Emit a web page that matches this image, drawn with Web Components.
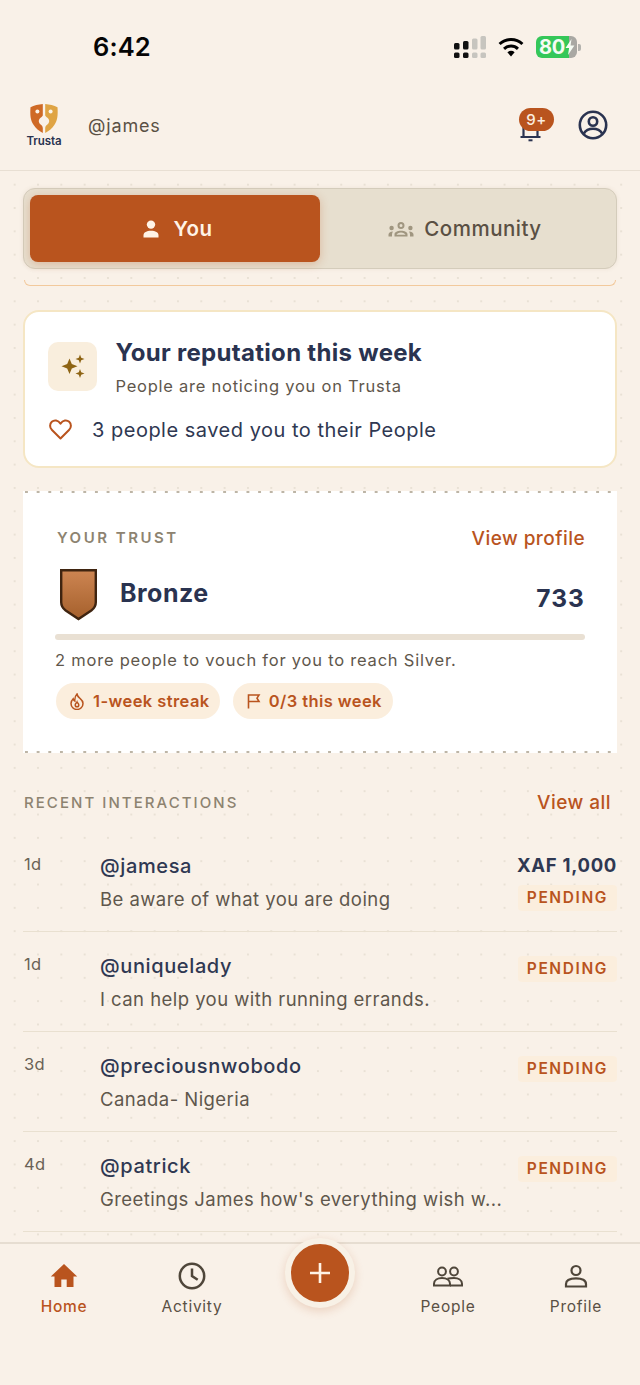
<!doctype html>
<html>
<head>
<meta charset="utf-8">
<title>Trusta</title>
<style>
  html, body { margin: 0; padding: 0; background: #f9f1e8; }
  body { width: 640px; height: 1385px; overflow: hidden; font-family: Inter, "Liberation Sans", sans-serif; display: flex; flex-direction: column; }
</style>
</head>
<body>
<status-bar></status-bar>
<top-header></top-header>
<home-feed>
  <tab-switch></tab-switch>
  <reputation-card></reputation-card>
  <trust-card></trust-card>
  <section-head></section-head>
  <interaction-row when="1d" handle="@jamesa" text="Be aware of what you are doing" amount="XAF 1,000"></interaction-row>
  <interaction-row when="1d" handle="@uniquelady" text="I can help you with running errands."></interaction-row>
  <interaction-row when="3d" handle="@preciousnwobodo" text="Canada- Nigeria"></interaction-row>
  <interaction-row when="4d" handle="@patrick" text="Greetings James how's everything wish w..."></interaction-row>
</home-feed>
<bottom-nav></bottom-nav>

<script>
class StatusBar extends HTMLElement {
  constructor () {
    super()
    this.shadow = this.attachShadow({ mode: 'open' })
  }

  connectedCallback () {
    this.shadow.innerHTML = `
    <style>
      :host{ display: flex; height: 90px; flex: none; box-sizing: border-box; padding: 30px 59px 0 93px; justify-content: space-between; align-items: flex-start; }
      .time{ font: 600 25.5px/34px Inter, sans-serif; color: #050505; letter-spacing: 0.1px; }
      .icons{ display: flex; align-items: center; gap: 11px; height: 34px; }
      svg{ display: block; }
      .battery{ position: relative; width: 41px; height: 22px; border-radius: 6px; overflow: hidden; background: linear-gradient(90deg, #35c759 0 80%, #a9a8a3 80%); }
      .battery span{ position: absolute; left: 3px; top: 0; font: 700 20px/22px Inter, sans-serif; color: #f5fbf3; letter-spacing: -0.3px; }
      .battery svg{ position: absolute; left: 29px; top: 3px; }
      .cap{ width: 3px; height: 7px; background: #b4b3ae; border-radius: 0 2px 2px 0; margin-left: -10px; }
    </style>
    <div class="time">6:42</div>
    <div class="icons">
      <svg width="32" height="22" viewBox="0 0 32 22">
        <rect x="0" y="7" width="5.500" height="6.500" rx="1.500" fill="#111"/>
        <rect x="9" y="5" width="5.500" height="8.500" rx="1.500" fill="#111"/>
        <rect x="18" y="2.500" width="5.500" height="11" rx="1.500" fill="#c7c5bf"/>
        <rect x="26.500" y="0" width="5.500" height="13.500" rx="1.500" fill="#c7c5bf"/>
        <rect x="0" y="16.500" width="5.500" height="5.500" rx="1.500" fill="#111"/>
        <rect x="9" y="16.500" width="5.500" height="5.500" rx="1.500" fill="#111"/>
        <rect x="18" y="16.500" width="5.500" height="5.500" rx="1.500" fill="#c7c5bf"/>
        <rect x="26.500" y="16.500" width="5.500" height="5.500" rx="1.500" fill="#c7c5bf"/>
      </svg>
      <svg width="28" height="20" viewBox="0 0 28 21">
        <path d="M14 20.500 10.200 16a5.600 5.600 0 0 1 7.600 0Z" fill="#000"/>
        <path d="M6.700 12.400a10.600 10.600 0 0 1 14.600 0" fill="none" stroke="#000" stroke-width="3.100"/>
        <path d="M2 7.400a17.400 17.400 0 0 1 24 0" fill="none" stroke="#000" stroke-width="3.100"/>
      </svg>
      <div class="battery">
        <span>80</span>
        <svg width="10" height="16" viewBox="0 0 10 16"><path d="M6.500 0 0.500 9h3.600L3 16l6.400-9.500H5.600Z" fill="#f5fbf3"/></svg>
      </div>
      <div class="cap"></div>
    </div>
    `
  }
}

class TopHeader extends HTMLElement {
  constructor () {
    super()
    this.shadow = this.attachShadow({ mode: 'open' })
  }

  connectedCallback () {
    this.shadow.innerHTML = `
    <style>
      :host{ display: flex; flex: none; height: 81px; box-sizing: border-box; align-items: center; padding: 0 32px 10px 26px; border-bottom: 1px solid #e8dfd3; }
      .logo{ display: flex; flex-direction: column; align-items: center; width: 36px; }
      .logo svg{ display: block; }
      .logo span{ font: 600 11.5px/13px Inter, sans-serif; color: #2a3350; margin-top: 1px; letter-spacing: -0.1px; }
      .name{ font: 400 18px/24px Inter, sans-serif; color: #5a5044; margin: 2px 0 0 26px; letter-spacing: 0.85px; flex: 1; }
      .bell{ position: relative; width: 30px; height: 34px; margin-right: 29px; }
      .bell svg{ position: absolute; left: 0; top: 0; }
      .badge{ position: absolute; left: 0; top: 0; width: 35px; height: 23px; background: #b9541e; border-radius: 12px; color: #fbeee0; font: 500 15px/23px Inter, sans-serif; text-align: center; letter-spacing: 0.4px; }
    </style>
    <div class="logo">
      <svg width="30" height="31" viewBox="0 0 30 31">
        <path d="M13.800 1C9.500 1.400 5 2.400 1.500 4.200 1 12 1.400 17 4.500 21.800c2.200 3.400 5.400 6.200 9.300 8.200v-5c-.1-1.500-.8-2.400-2.200-3.500-2-1.600-2.500-4.200-.8-6 1-1 2-1.600 3-3Z" fill="#cf6a26"/>
        <path d="M16.200 1c4.300.4 8.800 1.400 12.300 3.200.5 7.800.1 12.800-3 17.600-2.200 3.400-5.400 6.200-9.300 8.200v-5c.1-1.500.8-2.400 2.200-3.500 2-1.600 2.500-4.200.8-6-1-1-2-1.600-3-3Z" fill="#dfa444"/>
        <circle cx="8.400" cy="8.500" r="2" fill="#fbf3e8"/>
        <circle cx="21.600" cy="8.500" r="2" fill="#fbf3e8"/>
      </svg>
      <span>Trusta</span>
    </div>
    <div class="name">@james</div>
    <div class="bell">
      <svg width="30" height="34" viewBox="0 0 30 34" fill="none" stroke="#2a3350" stroke-width="2.200">
        <path d="M1.500 29h20M4.500 29V14a7 7 0 0 1 14 0v15"/>
        <path d="M9.500 32.300h4" stroke-width="2"/>
      </svg>
      <div class="badge">9+</div>
    </div>
    <svg width="30" height="30" viewBox="0 0 30 30" fill="none" stroke="#2a3350" stroke-width="2.600">
      <circle cx="15" cy="15" r="13.200"/>
      <circle cx="15" cy="11.500" r="4.200"/>
      <path d="M5.800 23.500c2-3.300 5.200-4.800 9.200-4.800s7.200 1.500 9.200 4.800"/>
    </svg>
    `
  }
}

class HomeFeed extends HTMLElement {
  constructor () {
    super()
    this.shadow = this.attachShadow({ mode: 'open' })
  }

  connectedCallback () {
    this.shadow.innerHTML = `
    <style>
      :host{ display: block; flex: none; height: 1071px; overflow: hidden; box-sizing: border-box; padding: 17px 23px 0 23px;
        background-image: radial-gradient(circle, #e9e1d5 0.8px, transparent 1.1px); background-size: 23.33px 23.33px; background-position: 3px 2px; }
    </style>
    <slot></slot>
    `
  }
}

class TabSwitch extends HTMLElement {
  constructor () {
    super()
    this.shadow = this.attachShadow({ mode: 'open' })
  }

  connectedCallback () {
    this.shadow.innerHTML = `
    <style>
      :host{ display: block; }
      .tabs{ display: flex; box-sizing: border-box; height: 81px; padding: 6px; background: #e7dfcf; border: 1.5px solid #d4ccbb; border-radius: 12px; box-shadow: 0 0 4px rgba(150,120,80,.12); }
      .tab{ flex: 1; display: flex; align-items: center; justify-content: center; gap: 10px; padding-top: 1px; font: 500 20.5px/28px Inter, sans-serif; color: #5a5044; letter-spacing: 0.5px; border-radius: 8px; }
      .on{ background: #b9541e; color: #fff3e6; font-weight: 600; gap: 13px; box-shadow: 0 2px 10px rgba(185,84,30,.28); flex: 0 0 290px; box-sizing: border-box; padding-left: 5px; }
      /* the card scrolled under the tabs, only its bottom edge shows */
      .peek{ margin: 11px 1px 0; height: 6px; border: 1.5px solid #f2c99c; border-top: 0; border-radius: 0 0 10px 10px; box-sizing: border-box; }
      svg{ display: block; }
    </style>
    <div class="tabs">
      <div class="tab on">
        <svg width="18" height="18" viewBox="0 0 18 18" fill="#fff3e6"><circle cx="9" cy="4.600" r="4.200"/><path d="M1.500 17.600v-2.200c0-3 3.200-4.600 7.500-4.600s7.500 1.600 7.500 4.600v2.200Z"/></svg>
        You
      </div>
      <div class="tab">
        <svg width="26" height="17" viewBox="0 0 26 17" fill="#a09680">
          <path d="M13 1a3 3 0 1 0 0 7 3 3 0 0 0 0-7Zm0 2a1.200 1.200 0 1 1 0 3 1.200 1.200 0 0 1 0-3Z"/>
          <path d="M6.500 15.500v-2.200c0-2.300 3-3.600 6.500-3.600s6.500 1.300 6.500 3.600v2.200Zm2-1.800h9c-.4-1-2.300-2.200-4.500-2.200s-4.100 1.200-4.500 2.200Z"/>
          <circle cx="3.600" cy="7" r="2.200"/><circle cx="22.400" cy="7" r="2.200"/>
          <path d="M.5 15.500v-2c0-1.600 1.500-2.700 4.500-3-.7 1-1 2-1 3v2ZM25.500 15.500v-2c0-1.600-1.500-2.700-4.500-3 .7 1 1 2 1 3v2Z"/>
        </svg>
        Community
      </div>
    </div>
    <div class="peek"></div>
    `
  }
}

class ReputationCard extends HTMLElement {
  constructor () {
    super()
    this.shadow = this.attachShadow({ mode: 'open' })
  }

  connectedCallback () {
    this.shadow.innerHTML = `
    <style>
      :host{ display: block; margin-top: 24px; box-sizing: border-box; height: 158px; padding: 29.5px 24px 0 23px; background: #fff; border: 2px solid #f5e6c4; border-radius: 16px; }
      .top{ display: flex; gap: 18.5px; }
      .spark{ width: 49px; height: 49px; background: #f9eedd; border-radius: 10px; display: flex; align-items: center; justify-content: center; }
      h2{ margin: -5px 0 0; font: 700 24px/32px Inter, sans-serif; color: #2a3350; letter-spacing: 0.3px; }
      p{ margin: 6px 0 0; font: 400 16.5px/22px Inter, sans-serif; color: #5f574c; letter-spacing: 0.75px; }
      .saved{ display: flex; align-items: center; gap: 20px; margin-top: 19px; font: 400 20px/28px Inter, sans-serif; color: #2f3852; letter-spacing: 0.5px; }
      svg{ display: block; }
    </style>
    <div class="top">
      <div class="spark">
        <svg width="26" height="26" viewBox="0 0 26 26" fill="#8e6414">
          <path d="M9.500 5.500 11.800 11 17.500 13.300 11.800 15.600 9.500 21 7.200 15.600 1.500 13.300 7.200 11Z"/>
          <path d="M20 1.500 21.200 4.800 24.500 6 21.200 7.200 20 10.500 18.800 7.200 15.500 6 18.800 4.800Z"/>
          <path d="M20 16 21.200 19.300 24.500 20.500 21.200 21.700 20 25 18.800 21.700 15.500 20.500 18.800 19.300Z"/>
        </svg>
      </div>
      <div>
        <h2>Your reputation this week</h2>
        <p>People are noticing you on Trusta</p>
      </div>
    </div>
    <div class="saved">
      <svg width="23" height="21" viewBox="0 0 23 21" fill="none" stroke="#b9541e" stroke-width="2" style="margin-left:1px"><path d="M11.500 19.500 3 11C.4 8.300.6 4.800 2.800 2.800 5.200.6 9 1 11.500 4.600 14 1 17.800.6 20.200 2.800c2.200 2 2.400 5.500-.2 8.200Z" stroke-linejoin="round"/></svg>
      3 people saved you to their People
    </div>
    `
  }
}

class TrustCard extends HTMLElement {
  constructor () {
    super()
    this.shadow = this.attachShadow({ mode: 'open' })
  }

  connectedCallback () {
    this.shadow.innerHTML = `
    <style>
      :host{ display: block; margin-top: 23px; box-sizing: border-box; height: 262px; padding: 36px 32px 0 32px;
        background: linear-gradient(90deg, #bdb5a6 0 3px, transparent 3px) 2px 0 / 11.67px 2px repeat-x, linear-gradient(90deg, #bdb5a6 0 3px, transparent 3px) 2px 100% / 11.67px 2px repeat-x, #fff; }
      .head{ display: flex; justify-content: space-between; align-items: center; height: 22px; margin-left: 2px; }
      .label{ font: 600 15px/22px Inter, sans-serif; color: #8d8370; letter-spacing: 2.5px; }
      .link{ font: 500 19px/24px Inter, sans-serif; color: #b9541e; letter-spacing: 0.45px; margin-top: 2px; }
      .tier{ display: flex; align-items: center; margin-top: 20px; height: 52px; padding-left: 5px; }
      .tier svg{ display: block; }
      .tier b{ font: 700 25px/32px Inter, sans-serif; color: #2a3350; letter-spacing: 0.5px; margin-left: 23px; flex: 1; margin-top: -4px; }
      .score{ font: 700 24.5px/32px Inter, sans-serif; color: #2a3350; letter-spacing: 1.1px; margin-top: 5px; }
      .bar{ height: 6px; background: #e9e0d3; border-radius: 3px; margin-top: 13px; }
      .hint{ margin-top: 9px; font: 400 16.5px/22px Inter, sans-serif; color: #5f574c; letter-spacing: 0.78px; }
      .pills{ display: flex; gap: 13px; margin: 12px 0 0 1px; }
      .pill{ display: flex; align-items: center; gap: 8px; height: 36px; padding: 0 10px 0 13px; background: #fbeedd; border-radius: 18px; font: 600 16.5px/22px Inter, sans-serif; color: #b9541e; letter-spacing: 0.42px; }
      .pill + .pill{ gap: 7px; padding-right: 11px; }
      .pill svg{ display: block; }
    </style>
    <div class="head"><span class="label">YOUR TRUST</span><span class="link">View profile</span></div>
    <div class="tier">
      <svg width="37" height="52" viewBox="0 0 37 52">
        <defs><linearGradient id="b" x1="0" y1="0" x2="0" y2="1"><stop offset="0" stop-color="#cd8552"/><stop offset="1" stop-color="#a5602c"/></linearGradient></defs>
        <path d="M1.200 1.200h34.600v32c0 3.500-1.500 6-4.500 8.300L18.500 50 5.700 41.500C2.700 39.200 1.200 36.700 1.200 33.200Z" fill="url(#b)" stroke="#3f2410" stroke-width="2.400"/>
      </svg>
      <b>Bronze</b>
      <span class="score">733</span>
    </div>
    <div class="bar"></div>
    <div class="hint">2 more people to vouch for you to reach Silver.</div>
    <div class="pills">
      <div class="pill">
        <svg width="16" height="17" viewBox="0 0 16 17" fill="none" stroke="#b9541e" stroke-width="1.500"><path d="M8 1c.5 2.500 1.500 3 3 4.300 1.700 1.400 3 3 3 5.200a6 6 0 0 1-12 0c0-2.200 1-3.500 2.200-4.700.3 1.300.8 2 1.600 2.300C5.500 5 6.300 2.800 8 1Z"/><path d="M8 9c.3 1 1.800 1.500 1.800 3a1.800 1.800 0 0 1-3.600 0C6.200 10.800 7.500 10 8 9Z"/></svg>
        1-week streak
      </div>
      <div class="pill">
        <svg width="16" height="16" viewBox="0 0 16 16" fill="none" stroke="#b9541e" stroke-width="1.600"><path d="M2.500 15.500V2h10.500l-2 3.200 2 3.300H2.500"/></svg>
        0/3 this week
      </div>
    </div>
    `
  }
}

class SectionHead extends HTMLElement {
  constructor () {
    super()
    this.shadow = this.attachShadow({ mode: 'open' })
  }

  connectedCallback () {
    this.shadow.innerHTML = `
    <style>
      :host{ display: flex; justify-content: space-between; align-items: center; margin-top: 38px; height: 24px; padding: 0 6px 0 1px; }
      .label{ font: 500 15px/22px Inter, sans-serif; color: #8d8370; letter-spacing: 2.05px; }
      .link{ font: 500 19px/24px Inter, sans-serif; color: #b9541e; letter-spacing: 0.45px; }
    </style>
    <span class="label">RECENT INTERACTIONS</span><span class="link">View all</span>
    `
  }
}

class InteractionRow extends HTMLElement {
  constructor () {
    super()
    this.shadow = this.attachShadow({ mode: 'open' })
  }

  connectedCallback () {
    const amount = this.getAttribute('amount')
    this.shadow.innerHTML = `
    <style>
      :host{ display: flex; box-sizing: border-box; height: 100px; border-bottom: 1px solid #e9e0d0; padding-top: 19px; }
      :host(:first-of-type){ margin-top: 21px; height: 96px; padding-top: 15px; }
      .when{ width: 76px; padding-left: 1px; font: 400 16.5px/24px Inter, sans-serif; color: #6a6256; letter-spacing: 0.4px; margin-top: 1px; }
      .main{ flex: 1; min-width: 0; padding-top: 1px; }
      .handle{ font: 500 20px/28px Inter, sans-serif; color: #2f3852; letter-spacing: 0.62px; }
      .text{ margin-top: 6px; font: 400 18.5px/26px Inter, sans-serif; color: #5f574c; letter-spacing: 0.45px; white-space: nowrap; }
      .side{ display: flex; flex-direction: column; align-items: flex-end; gap: 7px; padding-top: 1px; }
      .amount{ font: 700 18.5px/26px Inter, sans-serif; color: #2f3852; letter-spacing: 0.7px; }
      .status{ box-sizing: border-box; height: 26px; padding: 0 9px; background: #fbeedd; border-radius: 4px; font: 600 15.5px/26px Inter, sans-serif; color: #b9541e; letter-spacing: 1.6px; }
      .status.alone{ margin-top: 4px; }
    </style>
    <div class="when">${this.getAttribute('when')}</div>
    <div class="main">
      <div class="handle">${this.getAttribute('handle')}</div>
      <div class="text">${this.getAttribute('text')}</div>
    </div>
    <div class="side">
      ${amount ? `<div class="amount">${amount}</div>` : ''}
      <div class="status ${amount ? '' : 'alone'}">PENDING</div>
    </div>
    `
  }
}

class BottomNav extends HTMLElement {
  constructor () {
    super()
    this.shadow = this.attachShadow({ mode: 'open' })
  }

  connectedCallback () {
    this.shadow.innerHTML = `
    <style>
      :host{ display: grid; grid-template-columns: repeat(5, 128px); flex: 1; box-sizing: border-box; position: relative; border-top: 2px solid #e6ddd1; padding-top: 16px; background: #f9f1e8; }
      .item{ display: flex; flex-direction: column; align-items: center; font: 400 15.5px/20px Inter, sans-serif; color: #5a5044; letter-spacing: 0.75px; }
      .item svg{ display: block; height: 32px; margin-bottom: 5px; }
      .home{ color: #b9541e; font-weight: 500; letter-spacing: 0.7px; }
      .fab{ position: absolute; left: 285px; top: -6px; width: 70px; height: 70px; box-sizing: border-box; border-radius: 50%; background: #b9541e; border: 6px solid #f8f1e6; box-shadow: 0 3px 10px rgba(185,84,30,.2); display: flex; align-items: center; justify-content: center; }
    </style>
    <div class="item home">
      <svg width="28" height="32" viewBox="0 0 28 32" fill="#b9541e"><path d="M14 4 .8 16.500h3.700V27h6.800v-7.500h5.400V27h6.800V16.500h3.700Z"/></svg>
      Home
    </div>
    <div class="item">
      <svg width="28" height="32" viewBox="0 0 28 32" fill="none" stroke="#4f463a" stroke-width="2.500"><circle cx="14" cy="16" r="12.200"/><path d="M14 8.500V16l5.700 3.800"/></svg>
      Activity
    </div>
    <div></div>
    <div class="item">
      <svg width="30" height="32" viewBox="0 0 30 32" fill="none" stroke="#4f463a" stroke-width="2"><circle cx="9" cy="11.500" r="3.900"/><circle cx="21" cy="11.500" r="3.900"/><path d="M1 25.500v-1.800c0-3.700 3.500-5.700 8-5.700s8 2 8 5.700v1.800Z"/><path d="M14.500 18.800c1.700-.6 4-.8 6.500-.8 4.500 0 8 2 8 5.700v1.800H17"/></svg>
      People
    </div>
    <div class="item">
      <svg width="24" height="32" viewBox="0 0 24 32" fill="none" stroke="#4f463a" stroke-width="2.200"><circle cx="12" cy="10.500" r="4.500"/><path d="M2 26.500v-2.500c0-3.700 3.900-5.700 10-5.700s10 2 10 5.700v2.500Z"/></svg>
      Profile
    </div>
    <div class="fab"><svg width="24" height="24" viewBox="0 0 24 24" stroke="#fff3e6" stroke-width="2.600"><path d="M12 2v20M2 12h20"/></svg></div>
    `
  }
}

customElements.define('status-bar', StatusBar)
customElements.define('top-header', TopHeader)
customElements.define('home-feed', HomeFeed)
customElements.define('tab-switch', TabSwitch)
customElements.define('reputation-card', ReputationCard)
customElements.define('trust-card', TrustCard)
customElements.define('section-head', SectionHead)
customElements.define('interaction-row', InteractionRow)
customElements.define('bottom-nav', BottomNav)
</script>
</body>
</html>
